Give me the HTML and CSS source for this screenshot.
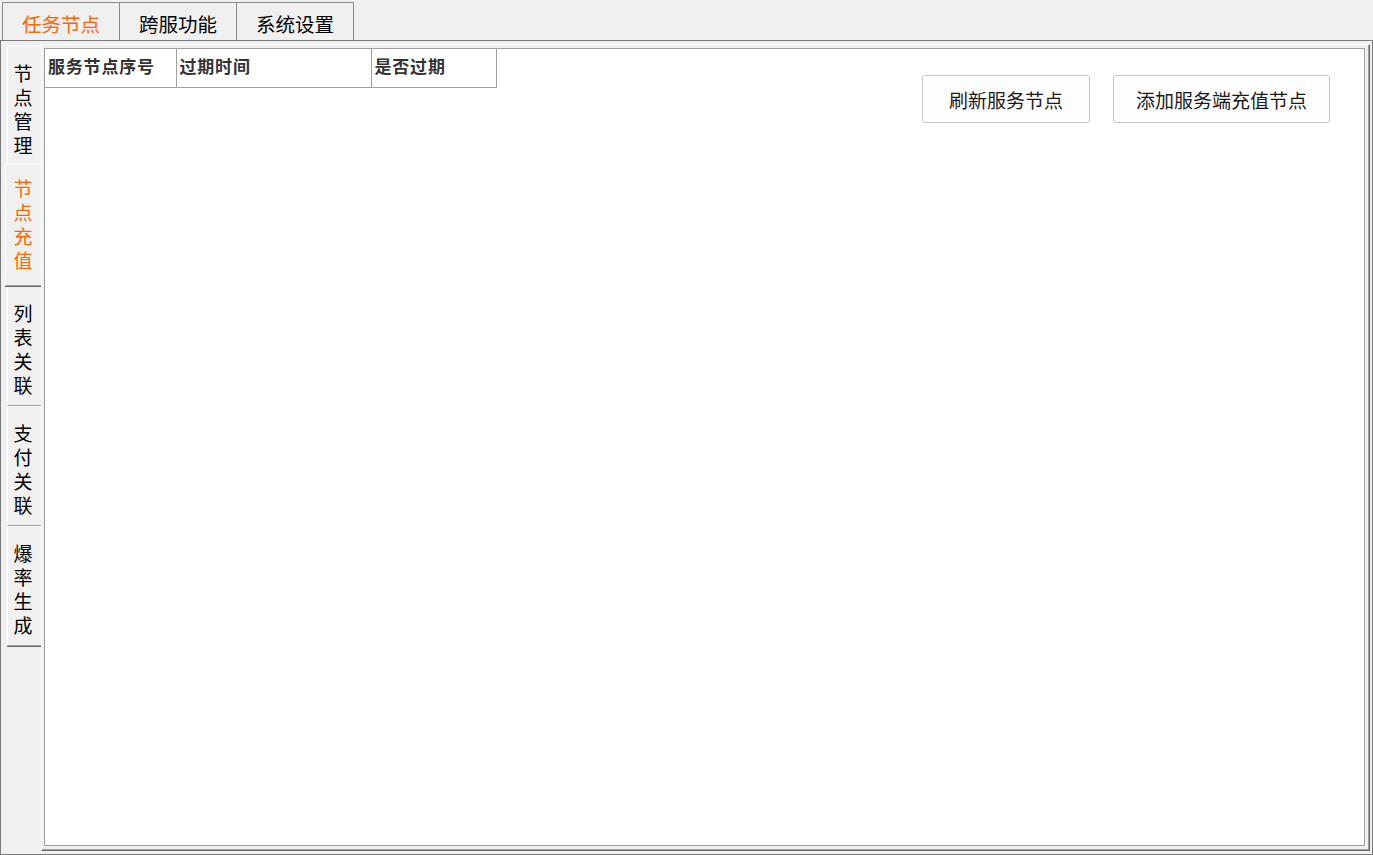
FILE: index.html
```
<!DOCTYPE html>
<html lang="zh-CN">
<head>
    <meta charset="UTF-8">
    <meta name="viewport" content="width=device-width, initial-scale=1.0">
    <title>任务节点</title>
    <link rel="stylesheet" href="styles.css">
</head>
<body>
    <div id="app">
        <div class="tab-bar">
            <div class="tab tab-active">任务节点</div>
            <div class="tab">跨服功能</div>
            <div class="tab">系统设置</div>
        </div>
        <div class="frame">
            <div class="side-tabs">
                <div class="side-tab"><span>节点管理</span></div>
                <div class="side-tab side-active"><span>节点充值</span></div>
                <div class="side-tab"><span>列表关联</span></div>
                <div class="side-tab"><span>支付关联</span></div>
                <div class="side-tab"><span>爆率生成</span></div>
            </div>
            <div class="page">
                <div class="content">
                    <table class="grid">
                        <thead>
                            <tr>
                                <th class="col-1">服务节点序号</th>
                                <th class="col-2">过期时间</th>
                                <th class="col-3">是否过期</th>
                            </tr>
                        </thead>
                    </table>
                    <div class="actions">
                        <button class="btn btn-refresh">刷新服务节点</button>
                        <button class="btn btn-add">添加服务端充值节点</button>
                    </div>
                </div>
            </div>
        </div>
    </div>
</body>
</html>
```

FILE: styles.css
```
* {
    box-sizing: border-box;
}

body {
    margin: 0;
    background-color: #f0f0f0;
    font-family: "Noto Sans CJK SC", "Noto Sans", sans-serif;
    color: #000;
}

#app {
    width: 1373px;
    height: 855px;
}

/*abas de cima*/
.tab-bar {
    height: 40px;
    padding: 2px 0 0 2px;
    display: flex;
    align-items: flex-end;
}

.tab {
    width: 118px;
    height: 38px;
    margin-right: -1px;
    padding-top: 4px;
    border: 1px solid #898989;
    border-bottom: none;
    display: flex;
    align-items: center;
    justify-content: center;
    font-size: 19.5px;
    line-height: 24px;
}

.tab-active {
    color: #ff6600;
}

/*moldura*/
.frame {
    height: 815px;
    border: 1px solid #7a7a7a;
    padding: 3px 2px 3px 4px;
    display: flex;
}

.side-tabs {
    width: 36px;
    padding-top: 2px;
    display: flex;
    flex-direction: column;
    align-items: flex-end;
}

.side-tab {
    width: 34px;
    height: 120px;
    padding: 14px 0 0 5px;
    background-color: #f0f0f0;
    border-top: 1px solid #fff;
    border-left: 1px solid #fff;
    border-bottom: 1px solid #a0a0a0;
    box-shadow: 0 1px 0 #696969;
    font-size: 19px;
    line-height: 24px;
}

.side-tab span {
    display: block;
    width: 20px;
    text-align: center;
}

.side-active {
    width: 36px;
    height: 122px;
    margin-top: -2px;
    padding: 11px 0 0 7px;
    color: #ff6600;
    position: relative;
}

.page {
    flex: 1;
    display: flex;
    padding: 3px 4px 4px 2px;
    border-top: 1px solid #fff;
    border-left: 1px solid #fff;
    border-right: 1px solid #696969;
    border-bottom: 1px solid #696969;
    box-shadow: inset -1px -1px 0 #a0a0a0;
}

.content {
    flex: 1;
    background-color: #fff;
    border: 1px solid #a0a0a0;
    display: flex;
    align-items: flex-start;
}

/*tabela*/
.grid {
    border-collapse: collapse;
    table-layout: fixed;
}

.grid th {
    height: 38px;
    padding: 6px 0 0 3px;
    vertical-align: top;
    text-align: left;
    border-right: 1px solid #a0a0a0;
    border-bottom: 1px solid #a0a0a0;
    font-size: 17px;
    line-height: 22px;
    letter-spacing: 0.8px;
    font-weight: bold;
    color: #333;
}

.col-1 { width: 131px; }
.col-2 { width: 195px; }
.col-3 { width: 125px; }

/*botoes*/
.actions {
    margin: 26px 34px 0 auto;
    display: flex;
    gap: 23px;
}

.btn {
    height: 48px;
    background-color: #fdfdfd;
    border: 1px solid #c6c6c6;
    border-radius: 3px;
    font-family: inherit;
    font-size: 19px;
    color: #1a1a1a;
    padding: 0;
}

.btn-refresh { width: 168px; }
.btn-add { width: 217px; }
```
